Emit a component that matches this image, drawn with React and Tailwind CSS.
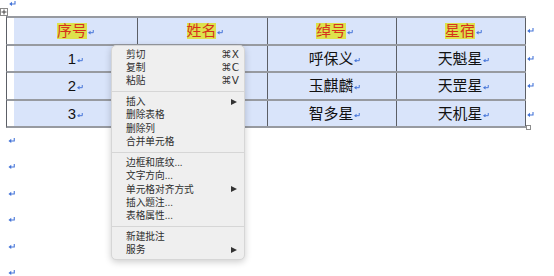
import React from "react";

const CJK = { fontFamily: "'Liberation Sans','Noto Sans CJK SC',sans-serif" };
const MENU_FONT = { fontFamily: "'Noto Sans CJK SC','Liberation Sans',sans-serif" };
const SC_FONT = { fontFamily: "'DejaVu Sans','Liberation Sans',sans-serif" };

function Mark({ w = 7, h = 5, className = "" }) {
  return (
    <svg width={w} height={h} viewBox="0 0 8 6" className={className} aria-hidden="true">
      <path d="M7 0 V3.6 H3" stroke="#4474d8" strokeWidth="1.3" fill="none" />
      <polygon points="0,3.6 3.4,1 3.4,6" fill="#4474d8" />
    </svg>
  );
}

function Arrow() {
  return (
    <svg width="6" height="6" viewBox="0 0 6 6" className="mr-[2px]" aria-hidden="true">
      <polygon points="0,0 6,3 0,6" fill="#333" />
    </svg>
  );
}

const header = ["序号", "姓名", "绰号", "星宿"];
const rows = [
  ["1", "", "呼保义", "天魁星"],
  ["2", "", "玉麒麟", "天罡星"],
  ["3", "", "智多星", "天机星"],
];
const widths = ["w-[131px]", "w-[130px]", "w-[129px]", "w-[129px]"];
const heights = ["h-[26px]", "h-[25px]", "h-[26px]", "h-[25px]"];

function Cell({ i, children }) {
  return (
    <div className={`${widths[i]} shrink-0 border-r border-[#5c5f66] h-full flex bg-white`}>
      <div
        className={`flex-1 h-full bg-[#d9e4fa] flex items-center justify-center ${
          i === 0 ? "ml-[7px]" : "pl-[5px]"
        }`}
      >
        {children}
      </div>
    </div>
  );
}

function Row({ idx, cells, head }) {
  const last = idx === 3;
  return (
    <div className="flex items-center">
      <div
        className={`flex w-[520px] border-l border-l-[#5c5f66] border-t-2 border-t-[#979aa0] ${
          last ? "border-b-2 border-b-[#979aa0]" : ""
        }`}
      >
        <div className={`flex ${heights[idx]}`}>
          {cells.map((c, i) => (
            <Cell key={i} i={i}>
              {c ? (
                head ? (
                  <span className="bg-[#dde24c] text-[#d6321c] text-[14.9px] leading-[16px]" style={CJK}>
                    {c}
                  </span>
                ) : (
                  <span className="text-[#111] text-[14.9px] leading-[16px]" style={CJK}>
                    {c}
                  </span>
                )
              ) : null}
              <Mark w={6} h={4.5} className="ml-[1px] mt-[3px]" />
            </Cell>
          ))}
        </div>
      </div>
      <Mark w={7} h={5} className="ml-[1px] mt-[1px]" />
    </div>
  );
}

const menuGroups = [
  [
    ["剪切", "⌘X"],
    ["复制", "⌘C"],
    ["粘贴", "⌘V"],
  ],
  [["插入", ">"], ["删除表格"], ["删除列"], ["合并单元格"]],
  [["边框和底纹..."], ["文字方向..."], ["单元格对齐方式", ">"], ["插入题注..."], ["表格属性..."]],
  [["新建批注"], ["服务", ">"]],
];

function Menu() {
  return (
    <div
      className="absolute left-[111px] top-[45px] w-[134px] bg-[#efefef] border border-[#d6d6d6] rounded-[5px] shadow-[0_2px_7px_rgba(0,0,0,0.2)] pt-[1.5px] pb-[2.5px] text-[#2e2e2e]"
      style={MENU_FONT}
    >
      {menuGroups.map((g, gi) => (
        <div key={gi}>
          {gi > 0 && (
            <div className="h-[7.3px] flex items-center">
              <div className="w-full h-px bg-[#d6d6d6]" />
            </div>
          )}
          {g.map(([label, extra], ii) => (
            <div key={ii} className="h-[13.4px] flex items-center justify-between pl-[14px] pr-[5px]">
              <span className="text-[9.7px] leading-[13.4px]">{label}</span>
              {extra === ">" ? (
                <Arrow />
              ) : extra ? (
                <span className="text-[10.5px] leading-[13.4px] text-[#333]" style={SC_FONT}>
                  {extra}
                </span>
              ) : null}
            </div>
          ))}
        </div>
      ))}
    </div>
  );
}

export default function App() {
  return (
    <div className="relative w-[554px] h-[276px] overflow-hidden bg-white">
      <div className="h-[15px]">
        <Mark w={7} h={5} className="ml-[9px] mt-[1px]" />
      </div>
      <div className="ml-[6px]">
        <Row idx={0} cells={header} head />
        {rows.map((r, i) => (
          <Row key={i} idx={i + 1} cells={r} />
        ))}
      </div>
      {[0, 1, 2, 3, 4, 5].map((k) => (
        <div key={k} className="h-[26.4px] pt-[10px]">
          <Mark w={7.5} h={5} className="ml-[7.5px]" />
        </div>
      ))}

      {/* table move handle */}
      <svg className="absolute left-0 top-[8px]" width="8" height="8" viewBox="0 0 8 8" aria-hidden="true">
        <rect x="0.5" y="0.5" width="7" height="7" fill="white" stroke="#8a8a8a" />
        <path d="M4 1.5 V6.5 M1.5 4 H6.5" stroke="#444" strokeWidth="1" />
      </svg>
      {/* table resize handle */}
      <div className="absolute left-[526px] top-[125px] w-[5px] h-[5px] border border-[#8d8d8d] bg-white" />

      <Menu />
    </div>
  );
}
